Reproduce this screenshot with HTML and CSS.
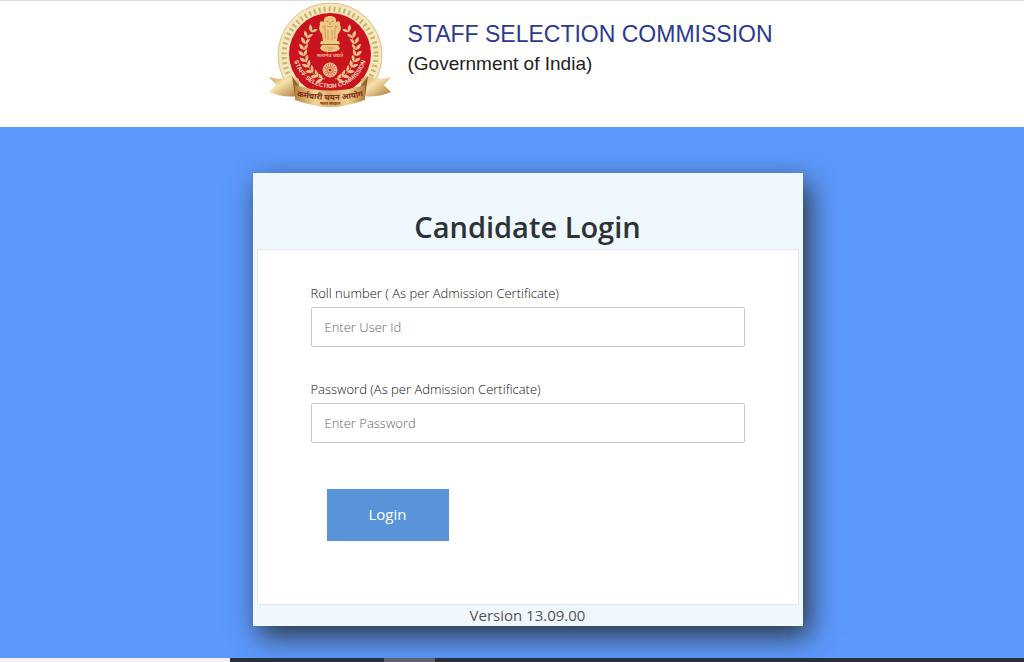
FILE: index.html
```
<!DOCTYPE html>
<html lang="en">
<head>
    <meta charset="UTF-8">
    <meta name="viewport" content="width=device-width, initial-scale=1.0">
    <title>Candidate Login</title>
    <link rel="stylesheet" href="styles.css">
</head>
<body>
    <header class="header">
        <svg class="logo" viewBox="0 0 130 108" role="img" aria-label="Staff Selection Commission">
            <defs>
                <linearGradient id="gold" x1="0" y1="0" x2="1" y2="0">
                    <stop offset="0" stop-color="#b98240"/>
                    <stop offset=".3" stop-color="#f1d898"/>
                    <stop offset=".5" stop-color="#dcae66"/>
                    <stop offset=".75" stop-color="#f0d494"/>
                    <stop offset="1" stop-color="#b98240"/>
                </linearGradient>
                <linearGradient id="tail" x1="0" y1="0" x2="1" y2="1">
                    <stop offset="0" stop-color="#c99c56"/>
                    <stop offset=".4" stop-color="#f7e3ab"/>
                    <stop offset="1" stop-color="#a87535"/>
                </linearGradient>
                <path id="motto" d="M28 50 A37 37 0 0 0 102 50"/>
                <path id="ribbon-line" d="M31 95 Q65 103 99 95"/>
                <path id="leaf" d="M0 0 C-4 -1 -5 -3 -5 -6 C-2 -5 0 -4 0 0 C0 -4 1 -5 4 -6 C4 -4 3 -1 0 0Z"/>
                <g id="branch">
                    <path d="M60 78 C45 76 37 62 43 36" fill="none" stroke="#e6b880" stroke-width=".8"/>
                    <use href="#leaf" transform="translate(58 78) rotate(-75)"/>
                    <use href="#leaf" transform="translate(53 75) rotate(-58)"/>
                    <use href="#leaf" transform="translate(48 71) rotate(-45)"/>
                    <use href="#leaf" transform="translate(44 66) rotate(-30)"/>
                    <use href="#leaf" transform="translate(41 61) rotate(-18)"/>
                    <use href="#leaf" transform="translate(39 55) rotate(-8)"/>
                    <use href="#leaf" transform="translate(39 49) rotate(2)"/>
                    <use href="#leaf" transform="translate(40 43) rotate(12)"/>
                    <use href="#leaf" transform="translate(42 37) rotate(22)"/>
                    <use href="#leaf" transform="translate(46 31) rotate(35)"/>
                </g>
            </defs>
            <!-- rope rim -->
            <circle cx="65" cy="54" r="52" fill="#f3e7bd" stroke="#dcc385"/>
            <circle cx="65" cy="54" r="46" fill="none" stroke="#ceb06d" stroke-width="5" stroke-dasharray="2 3"/>
            <circle cx="65" cy="53" r="42" fill="#f5e3b4"/>
            <circle cx="65" cy="53" r="41" fill="#c9141f"/>
            <g fill="#ecc48c">
                <use href="#branch"/>
                <use href="#branch" transform="translate(130 0) scale(-1 1)"/>
            </g>
            <!-- lion capital -->
            <g fill="#edc983">
                <path d="M59 21 C58 17 61 15 65 15 C69 15 72 17 71 21 C74 19 76 21 75 24 C77 27 75 31 73 33 L72 40 H58 L57 33 C55 31 53 27 55 24 C54 21 56 19 59 21Z"/>
                <path d="M56 40 H74 L75 43 H55Z"/>
                <path d="M57 44 H73 L75 47 C74 50 70 51 65 51 C60 51 56 50 55 47Z"/>
            </g>
            <g fill="none" stroke="#b87438" stroke-width=".6">
                <path d="M61 20 L64 21 M69 20 L66 21 M65 21 V24 M62 25 Q65 27 68 25 M60 24 C59 28 61 31 60 38 M70 24 C71 28 69 31 70 38 M63 29 V39 M67 29 V39 M57 25 L59 26 M73 25 L71 26"/>
                <path d="M56 43.5 H74 M60 47 H70 M63 49 H67"/>
            </g>
            <text class="logo-satya" x="65" y="56">सत्यमेव जयते</text>
            <!-- chakra -->
            <circle cx="65" cy="69" r="7" fill="#d8754f" stroke="#f1d29b"/>
            <circle cx="65" cy="69" r="5" fill="none" stroke="#f1d29b" stroke-width="3" stroke-dasharray="1 1"/>
            <circle cx="65" cy="69" r="2" fill="#c9141f" stroke="#f1d29b"/>
            <text class="logo-motto"><textPath href="#motto" startOffset="50%">STAFF SELECTION COMMISSION</textPath></text>
            <!-- ribbon -->
            <path d="M4 76 Q15 80 27 75 L34 78 V95 Q18 97 4 91 L11 84Z" fill="url(#tail)"/>
            <path d="M126 76 Q115 80 103 75 L96 78 V95 Q112 97 126 91 L119 84Z" fill="url(#tail)"/>
            <path d="M27 75 L35 86 L30 96Z M103 75 L95 86 L100 96Z" fill="#94642e"/>
            <path d="M30 84 Q65 95 100 84 V99 Q65 112 30 99Z" fill="url(#gold)"/>
            <text class="logo-ribbon"><textPath href="#ribbon-line" startOffset="50%">कर्मचारी चयन आयोग</textPath></text>
            <text class="logo-sarkar" x="65" y="104">भारत सरकार</text>
        </svg>
        <div class="brand">
            <div class="brand-name">STAFF SELECTION COMMISSION</div>
            <div class="brand-sub">(Government of India)</div>
        </div>
    </header>
    <main class="main">
        <section class="card">
            <h1>Candidate Login</h1>
            <form class="login-form">
                <div class="field">
                    <label for="roll">Roll number ( As per Admission Certificate)</label>
                    <input type="text" id="roll" placeholder="Enter User Id">
                </div>
                <div class="field">
                    <label for="password">Password (As per Admission Certificate)</label>
                    <input type="password" id="password" placeholder="Enter Password">
                </div>
                <button type="submit" class="button">Login</button>
            </form>
            <div class="version">Version 13.09.00</div>
        </section>
    </main>
    <div class="taskbar">
        <div class="search"></div>
        <div class="active-task"></div>
    </div>
</body>
</html>
```
FILE: styles.css
```
* {
    box-sizing: border-box;
}
body {
    display: flex;
    flex-direction: column;
    min-height: 100vh;
    margin: 0;
    background-color: #5c99fc;
    font-family: "Open Sans", "Noto Sans", sans-serif;
    color: #333;
}
.header {
    display: flex;
    justify-content: center;
    gap: 12px;
    padding: 0 0 18px 14px;
    background-color: #fff;
    border-top: 1px solid #dcdcdc;
    font-family: "Liberation Sans", Arial, sans-serif;
}
.logo {
    width: 130px;
    height: 108px;
}
.logo text {
    text-anchor: middle;
    font-family: "Liberation Sans", "Noto Sans", sans-serif;
    font-weight: bold;
}
.logo .logo-motto {
    font-size: 6px;
    fill: #f6dfc0;
}
.logo .logo-satya {
    font-size: 5px;
    fill: #ecb287;
}
.logo .logo-ribbon {
    font-size: 8px;
    fill: #7c2a18;
}
.logo .logo-sarkar {
    font-size: 4px;
    fill: #7c2a18;
}
.brand {
    padding-top: 18px;
}
.brand-name {
    font-size: 23px;
    line-height: 30px;
    color: #2b3990;
}
.brand-sub {
    font-size: 19px;
    line-height: 30px;
    color: #222;
}
.main {
    flex: 1;
    padding: 46px 0 32px 31px;
}
.card {
    max-width: 550px;
    margin: 0 auto;
    padding: 32px 4px 0;
    background-color: #eff7ff;
    box-shadow: 6px 10px 26px rgba(40, 40, 40, 0.9);
}
.card h1 {
    margin: 0;
    font-size: 29px;
    line-height: 44px;
    font-weight: 600;
    text-align: center;
    color: #2d3236;
}
.login-form {
    padding: 31px 53px 63px;
    background-color: #fff;
    border: 1px solid #dfe6ec;
}
.field {
    margin-bottom: 30px;
}
.field label {
    display: block;
    margin-bottom: 2px;
    font-size: 13px;
    font-weight: 300;
    line-height: 24px;
    color: #111;
}
.field input {
    display: block;
    width: 100%;
    height: 40px;
    padding: 0 13px;
    border: 1px solid #c8c8c8;
    border-radius: 2px;
    background-color: #fff;
    font-family: inherit;
    font-size: 13px;
    font-weight: 300;
}
.field input::placeholder {
    color: #666;
}
.button {
    display: block;
    width: 122px;
    height: 52px;
    margin: 46px 0 0 16px;
    padding-bottom: 3px;
    border: 0;
    background-color: #5894d7;
    color: #fff;
    font-family: inherit;
    font-size: 15px;
    font-weight: 500;
    cursor: pointer;
}
.button:hover {
    background-color: #3f7fc6;
}
.version {
    font-size: 15px;
    line-height: 21px;
    text-align: center;
    color: #555;
}
.taskbar {
    position: relative;
    display: flex;
    gap: 15%;
    height: 4px;
    background-color: #25313d;
}
.search {
    width: 22.5%;
    background-color: #f3f3f3;
}
.active-task {
    width: 5%;
    background-color: #59646e;
}
```
